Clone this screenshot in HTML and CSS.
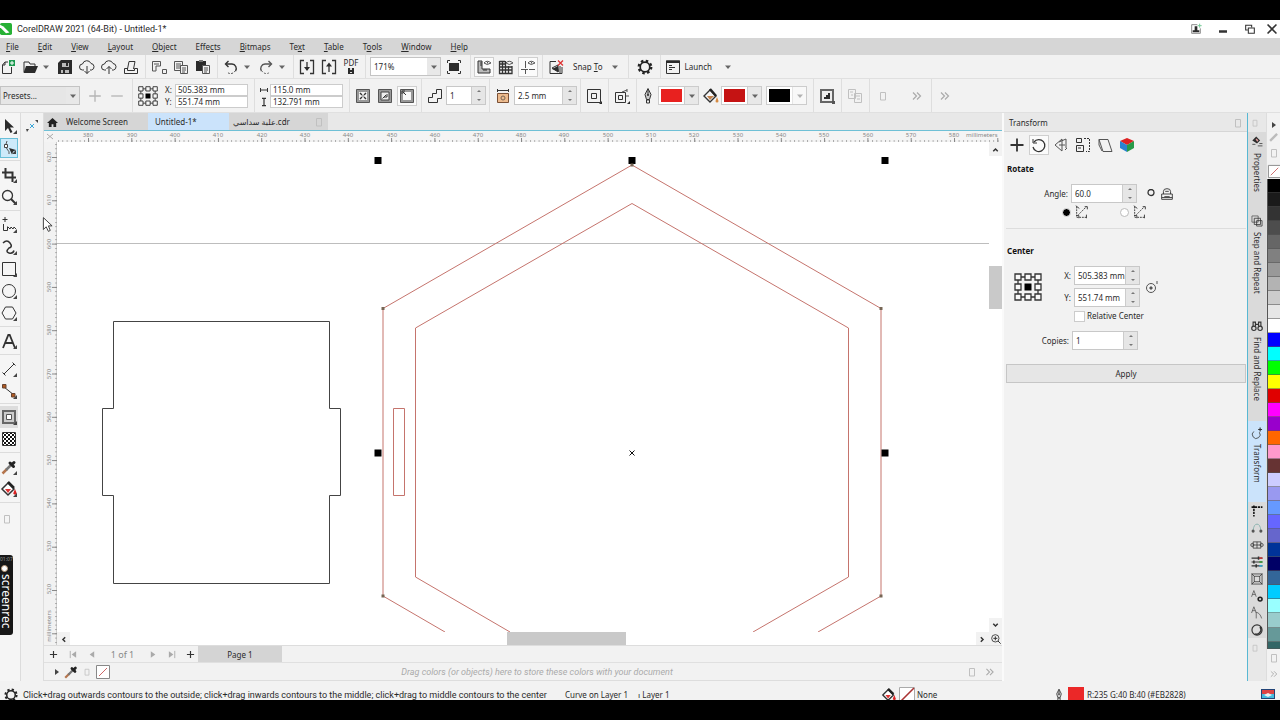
FILE: index.html
```html
<!DOCTYPE html>
<html lang="en">
<head>
<meta charset="utf-8">
<title>CorelDRAW 2021 (64-Bit) - Untitled-1*</title>
<link rel="stylesheet" href="styles.css">
</head>
<body>
<svg class="defs" aria-hidden="true">
  <symbol id="i-down" viewBox="0 0 10 10"><path d="M2 3.500h6L5 7z" fill="#666"/></symbol>
  <symbol id="i-box" viewBox="0 0 18 18"><path d="M6.500 5.500h5v7.500h-5z" fill="none" stroke="#c0c0c0"/></symbol>
  <symbol id="i-more" viewBox="0 0 18 18"><path d="M5 5.500l3.500 3.500L5 12.500M9 5.500l3.500 3.500L9 12.500" fill="none" stroke="#aaa" stroke-width="1.200"/></symbol>
  <symbol id="i-new" viewBox="0 0 18 18"><path d="M9 4H6L3.500 7v8.500h9V9M3.500 7H6V4" class="l"/><path d="M10 2h6v6h-6z" fill="#1c9a50"/><path d="M13 3v4M11 5h4" stroke="#fff"/></symbol>
  <symbol id="i-open" viewBox="0 0 18 18"><path d="M3 14V4h5l1 2h5v2" class="l"/><path d="M5 8h12l-3 7H2.500z" class="f"/></symbol>
  <symbol id="i-save" viewBox="0 0 18 18"><path d="M2 5l3-3h11v14H2z" class="f"/><path d="M6 5h7v4H6zM5 12h8v3H5z" fill="#bbb"/><path d="M10 5h2v3h-2zM7 12h2v3H7z" class="f"/></symbol>
  <symbol id="i-cdown" viewBox="0 0 18 18"><path d="M6 12H4.500a3 3 0 0 1 0-6 4.500 4.500 0 0 1 8.500-.5 3.300 3.300 0 0 1 .5 6.500H12M9 8v7.500M6.500 13L9 15.500 11.500 13" class="l"/></symbol>
  <symbol id="i-cup" viewBox="0 0 18 18"><path d="M6 12H4.500a3 3 0 0 1 0-6 4.500 4.500 0 0 1 8.500-.5 3.300 3.300 0 0 1 .5 6.500H12M9 16V8.500M6.500 11L9 8.500 11.500 11" class="l"/></symbol>
  <symbol id="i-print" viewBox="0 0 18 18"><path d="M5.500 11L7 3.500h6l-1.500 7.500M2.500 10.500h3v2h7v-2h3v5h-13z" class="l"/></symbol>
  <symbol id="i-cut" viewBox="0 0 18 18"><path d="M2.500 13V3.500h8V8H6v5zM4 6h5M12.500 11.500h4v4h-4z" class="g"/></symbol>
  <symbol id="i-copy" viewBox="0 0 18 18"><path d="M2.500 3.500h8v9h-8zM4 6h5M4 8h5M4 10h4" class="g"/><path d="M8.500 7.500h7v8h-7z" fill="#f2f2f2" stroke="#555"/><path d="M10 10h4M10 12h4M10 14h3" class="g"/></symbol>
  <symbol id="i-paste" viewBox="0 0 18 18"><path d="M2 3h10v10H2z" class="f"/><path d="M5 2h4v2H5z" fill="#777"/><path d="M8.500 7.500h7v8h-7z" fill="#f2f2f2" stroke="#555"/><path d="M10 10h4M10 12h4M10 14h3" class="g"/></symbol>
  <symbol id="i-undo" viewBox="0 0 18 18"><path d="M4 6h6a4.500 4.500 0 0 1 3.500 7" class="l" stroke-width="1.400"/><path d="M6.500 3L3.500 6l3 3" class="l" stroke-width="1.400"/><path d="M13 13a5 5 0 0 1-8 1" class="l" stroke-dasharray="1.500 1.500"/></symbol>
  <symbol id="i-redo" viewBox="0 0 18 18"><path d="M14 6H8a4.500 4.500 0 0 0-3.500 7" class="g" stroke-width="1.400"/><path d="M11.500 3l3 3-3 3" class="g" stroke-width="1.400"/><path d="M5 13a5 5 0 0 0 8 1" class="g" stroke-dasharray="1.500 1.500"/></symbol>
  <symbol id="i-import" viewBox="0 0 18 18"><path d="M6 2.500H2.500v13H6M12 2.500h3.500v13H12M9 4v8" class="l" stroke-width="1.300"/><path d="M6 9l3 4 3-4z" class="f"/></symbol>
  <symbol id="i-export" viewBox="0 0 18 18"><path d="M6 2.500H2.500v13H6M12 2.500h3.500v13H12M9 14V6" class="l" stroke-width="1.300"/><path d="M6 8.500l3-4 3 4z" class="f"/></symbol>
  <symbol id="i-disk" viewBox="0 0 8 8"><path d="M1 1h6v6H1z" class="f"/><path d="M3 1h2v2H3zM3 5h2v1H3z" fill="#ddd"/></symbol>
  <symbol id="i-full" viewBox="0 0 18 18"><path d="M4 5h10v8H4z" class="f"/><path d="M2.500 5V2.500H5M13 2.500h2.500V5M15.500 13v2.500H13M5 15.500H2.500V13" class="l"/></symbol>
  <symbol id="i-ruler" viewBox="0 0 18 18"><path d="M3 3h4v8h8v4H3z" fill="#bbb" stroke="#333"/><path d="M5 5h2M5 7h2M9 11v2M11 11v2" class="l"/><path d="M9 5q3-3.500 7 0-4 3-7 0zM12.500 4v1.500" class="g"/></symbol>
  <symbol id="i-grid" viewBox="0 0 18 18"><path d="M2.500 3v12.500H15V8M2.500 6H8M2.500 9H15M2.500 12H15M5.500 3v12.500M8.500 3v12.500M11.500 8v7.500M2.500 3.500H8" class="l" stroke-width="1.300"/><path d="M9 5q3-3.500 7 0-4 3-7 0z" class="g"/></symbol>
  <symbol id="i-guide" viewBox="0 0 18 18"><path d="M6.500 3v13M2 11.500h14" class="g" stroke-dasharray="7 1"/><path d="M9 5q3-3.500 7 0-4 3-7 0zM12.500 4v1.500" class="g"/></symbol>
  <symbol id="i-nosnap" viewBox="0 0 18 18"><path d="M9 3.500H3v12h12V9M13 8v7M5 10l6-3v7z" class="l"/><path d="M11 8l-6 3 7 3z" class="f"/><path d="M11 2.500l5 5M16 2.500l-5 5" stroke="#d33" stroke-width="1.300"/></symbol>
  <symbol id="i-gear" viewBox="0 0 18 18"><circle cx="9" cy="9" r="6.300" fill="none" stroke="#222" stroke-width="2.200" stroke-dasharray="2.500 2.450"/><circle cx="9" cy="9" r="4.800" fill="none" stroke="#222" stroke-width="1.700"/></symbol>
  <symbol id="i-launch" viewBox="0 0 18 18"><path d="M2.500 3h13v12.500h-13z" class="l"/><path d="M2 2.500h14V5H2z" class="f"/><path d="M5 7.500h3M5 9.500h6M5 11.500h3" class="l"/></symbol>
  <symbol id="i-plus" viewBox="0 0 18 18"><path d="M9 2.500v13M2.500 9h13" stroke="#b5b5b5" stroke-width="1.500"/></symbol>
  <symbol id="i-minus" viewBox="0 0 18 18"><path d="M2.500 9h13" stroke="#b5b5b5" stroke-width="1.500"/></symbol>
  <symbol id="i-origin" viewBox="0 0 28 28"><path d="M4 4h20v20H4z" class="l" stroke-width="1.300"/><path d="M1 1h6v6H1zM11 1h6v6h-6zM21 1h6v6h-6zM1 11h6v6H1zM21 11h6v6h-6zM1 21h6v6H1zM11 21h6v6h-6zM21 21h6v6h-6z" fill="#f8f8f8" stroke="#333" stroke-width="1.300"/><path d="M10.500 10.500h7v7h-7z" fill="#000"/></symbol>
  <symbol id="i-w" viewBox="0 0 10 10"><path d="M.5 2.500v5M9.500 2.500v5M1 5h8" class="l" stroke-width="1.500"/></symbol>
  <symbol id="i-h" viewBox="0 0 10 10"><path d="M2.500 .5h5M2.500 9.500h5M5 1v8" class="l" stroke-width="1.500"/></symbol>
  <symbol id="i-c1" viewBox="0 0 18 18"><path d="M2.500 2.500h13v13h-13z" fill="#999" stroke="#555"/><path d="M5 5h8v8H5z" fill="#f4f4f4"/><path d="M6 6l2 2M12 6l-2 2M6 12l2-2M12 12l-2-2M8.500 9h1" class="l" stroke-width="1.400"/></symbol>
  <symbol id="i-c2" viewBox="0 0 18 18"><path d="M2.500 2.500h13v13h-13z" fill="#999" stroke="#555"/><path d="M5 5h8v8H5z" fill="#eee" stroke="#444"/><path d="M8 10h3V7M6.500 11.500L10 8" class="l"/></symbol>
  <symbol id="i-c3" viewBox="0 0 18 18"><path d="M2.500 2.500h13v13h-13z" fill="#999" stroke="#555"/><path d="M7 5h6v8H5V7z" fill="#f7f7f7"/><path d="M4 7V4h3M5 5l3 3" class="l"/></symbol>
  <symbol id="i-steps" viewBox="0 0 18 18"><path d="M2.500 15.500v-5h4v-4h4v-4h5v9h-4v4z" class="l"/></symbol>
  <symbol id="i-off" viewBox="0 0 18 18"><path d="M3.500 6.500h11v9h-11z" fill="#edbb8e" stroke="#795036"/><circle cx="9" cy="11" r="2" fill="none" stroke="#765"/><path d="M3 3.500h12M3.500 2v3M14.500 2v3" class="l"/></symbol>
  <symbol id="i-corner" viewBox="0 0 18 18"><path d="M2.500 2.500h13v13h-13zM6.500 6.500h5v5h-5z" class="l"/><path d="M17 14v3h-3z" class="f"/></symbol>
  <symbol id="i-accel" viewBox="0 0 18 18"><path d="M2.500 5.500h10v10h-10zM5.500 8.500h4v4h-4z" class="l"/><path d="M9 5l5-2M14 2v3M13 9h3" class="g"/><path d="M17 14v3h-3z" class="f"/></symbol>
  <symbol id="i-pen" viewBox="0 0 18 18"><path d="M9 1.500l3 6-1.500 5h-3L6 7.500zM9 2v6" fill="#ccc" stroke="#333"/><circle cx="9" cy="8" r="1" class="f"/><path d="M7.500 13h3v3h-3z" class="l"/></symbol>
  <symbol id="i-bucket" viewBox="0 0 18 18"><path d="M8 3l6 6-6 6-6-6z" fill="#f5f5f5" stroke="#333" stroke-width="1.400"/><path d="M8 2l6 7" stroke="#222" stroke-width="2.500"/><path d="M5 9h7l-4 4z" fill="#c0804b"/><path d="M15 10l1.500 4a1.500 1.500 0 0 1-3 0z" fill="#d68b42"/></symbol>
  <symbol id="i-bucketr" viewBox="0 0 18 18"><path d="M8 3l6 6-6 6-6-6z" fill="#fff" stroke="#333" stroke-width="1.500"/><path d="M8 2l6 6" stroke="#222" stroke-width="2.500"/><path d="M5 9h6l-3 4z" fill="#d33"/><path d="M15 9l1.800 4.500a2 2 0 0 1-3.600 0z" fill="#d22"/></symbol>
  <symbol id="i-clear" viewBox="0 0 18 18"><path d="M3 3h12v12H3z" fill="#eee" stroke="#666" stroke-width="2"/><path d="M6 12V10h2V8h2V6h2v6z" class="f"/><path d="M14 14h3v3h-3z" fill="#555"/></symbol>
  <symbol id="i-dup" viewBox="0 0 18 18"><path d="M2.500 2.500h7v9h-7zM8.500 6.500h7v9h-7zM4 5h3M5 8h2M10 9h4M11 12h3" fill="none" stroke="#c0c0c0"/></symbol>
  <symbol id="t-pick" viewBox="0 0 18 18"><path d="M5 2v12l3-3 2.500 5 2-1L10 10.500h4z" class="f"/></symbol>
  <symbol id="t-shape" viewBox="0 0 18 18"><path d="M7 2q-3 5 0 8t2 5" class="g"/><path d="M4.500 5.500h3v3h-3z" fill="#fff" stroke="#444"/><path d="M9 9l7 2-3 1.500-1 3z" class="f"/></symbol>
  <symbol id="t-crop" viewBox="0 0 18 18"><path d="M5.500 2v9.500H16M2 6.500h10.500V16" class="l" stroke-width="2"/></symbol>
  <symbol id="t-zoom" viewBox="0 0 18 18"><circle cx="7.500" cy="7.500" r="5" class="l" stroke-width="1.300"/><path d="M11 11l4.500 4.500" class="l" stroke-width="2"/></symbol>
  <symbol id="t-free" viewBox="0 0 18 18"><path d="M5 1v5M2.500 3.500h5M3.500 8v6.500h4v-4M8 11l2 2 1-2 2 2 1-2 2 2" class="l"/></symbol>
  <symbol id="t-art" viewBox="0 0 18 18"><path d="M3 5q4-4 7 0t-1 5q-4 4 0 5 4 1 5-2.500" class="l" stroke-width="1.500"/></symbol>
  <symbol id="t-rect" viewBox="0 0 18 18"><path d="M2.500 2.500h13v13h-13z" class="l"/></symbol>
  <symbol id="t-ell" viewBox="0 0 18 18"><circle cx="9" cy="9" r="6.500" class="l"/></symbol>
  <symbol id="t-poly" viewBox="0 0 18 18"><path d="M5.500 3h7L16 9l-3.500 6h-7L2 9z" class="l"/></symbol>
  <symbol id="t-text" viewBox="0 0 18 18"><path d="M3 16L8.300 3h1.400L15 16M5 11h8" class="l" stroke-width="1.800"/></symbol>
  <symbol id="t-dim" viewBox="0 0 18 18"><path d="M4 14L14 4M2.500 12.500l3 3M12.500 2.500l3 3" class="l"/></symbol>
  <symbol id="t-conn" viewBox="0 0 18 18"><path d="M4 5l10 8" class="l"/><path d="M2.500 2.500h3.500v3.500H2.500zM11.500 11.500H15V15h-3.500z" fill="#b05a20" stroke="#643"/></symbol>
  <symbol id="t-cont" viewBox="0 0 18 18"><path d="M3 3h12v12H3z" fill="#ccc" stroke="#666" stroke-width="2"/><path d="M6.500 6.500h5v5h-5z" fill="#fff" stroke="#555"/></symbol>
  <pattern id="chk" width="4" height="4" patternUnits="userSpaceOnUse"><path d="M0 0h2v2H0zM2 2h2v2H2z" fill="#111"/></pattern>
  <symbol id="t-trans" viewBox="0 0 18 18"><path d="M2.500 2.500h13v13h-13z" fill="#fff" stroke="#333"/><path d="M3 3h12v12H3z" fill="url(#chk)"/></symbol>
  <symbol id="t-eye" viewBox="0 0 18 18"><path d="M2.500 15.500L7 11" stroke="#b5754d" stroke-width="2.500"/><path d="M6 12l5-5" stroke="#777" stroke-width="2.500"/><path d="M10 5l3.500 3.500M12 6.500l2-2" stroke="#222" stroke-width="3" stroke-linecap="round"/></symbol>
  <symbol id="d-move" viewBox="0 0 18 18"><path d="M9 2.500v13M2.500 9h13" class="l" stroke-width="1.800"/></symbol>
  <symbol id="d-rot" viewBox="0 0 18 18"><path d="M4 6a6 6 0 1 1-1 5" class="l" stroke-width="1.300"/><path d="M3 3v4h4" class="l"/></symbol>
  <symbol id="d-mir" viewBox="0 0 18 18"><path d="M10 3L3 9l7 6zM7 6l7-3v9M7 9h6M13 14l2-2" class="g"/></symbol>
  <symbol id="d-size" viewBox="0 0 18 18"><path d="M2.500 2.500h5v4h-5zM2.500 9.500h7v6h-7zM4 12h3" class="l"/><path d="M10 2.500h5.500v13H12" class="l" stroke-dasharray="2 1"/></symbol>
  <symbol id="d-skew" viewBox="0 0 18 18"><path d="M3 3.500h9l4 12H7zM3 3.500V9l3 6" class="g"/></symbol>
  <symbol id="d-3d" viewBox="0 0 18 18"><path d="M9 2l7 3-7 4-7-4z" fill="#d22"/><path d="M2 5l7 4v7l-7-4z" fill="#2b82d0"/><path d="M16 5L9 9v7l7-4z" fill="#279a48"/></symbol>
  <symbol id="d-r1" viewBox="0 0 18 18"><path d="M3 3v12h12M5 12l9-9" class="l" stroke-dasharray="2 1"/><path d="M2 2l4 3M12 3h3v3M2.500 13h3v3M14 12v4" class="l"/></symbol>
  <symbol id="d-lock" viewBox="0 0 18 18"><path d="M5 9V6q0-3 4-3t4 3v3M3 9h12v6H3zM6 12h6M7 6h4M3 13h12" class="l"/></symbol>
  <symbol id="d-cen" viewBox="0 0 18 18"><circle cx="8" cy="10" r="4.500" class="g"/><circle cx="8" cy="10" r="1" class="f"/><path d="M8 8v4M6 10h4M14 3v3" class="g"/></symbol>
  <symbol id="s-prop" viewBox="0 0 18 18"><path d="M3 7l5-5 5 5-4 4z" class="f"/><path d="M8 5l2 3" stroke="#d99" stroke-width="2"/><path d="M12 11h4M10 14h6M3 12h4" class="l"/></symbol>
  <symbol id="s-step" viewBox="0 0 18 18"><path d="M2.500 2.500h8v8h-8z" class="g"/><path d="M5.500 5.500h8v8h-8zM8.500 8.500h7v7h-7z" class="l"/></symbol>
  <symbol id="s-find" viewBox="0 0 18 18"><path d="M4 9V4h3v5M11 9V4h3v5M7 7h4" class="l" stroke-width="1.500"/><circle cx="5" cy="12" r="2.800" class="l" stroke-width="1.500"/><circle cx="13" cy="12" r="2.800" class="l" stroke-width="1.500"/></symbol>
  <symbol id="s-rot" viewBox="0 0 18 18"><path d="M12 8a5 5 0 1 1-7-1" class="l"/><path d="M13 2v5M10.500 4.500h5" class="l" stroke-width="1.500"/></symbol>
  <symbol id="s-guide" viewBox="0 0 18 18"><path d="M5 2v14M2 4h14" stroke="#111" stroke-width="2" stroke-dasharray="3 1"/></symbol>
  <symbol id="s-join" viewBox="0 0 18 18"><path d="M4 12Q5 4 9 4t5 8" fill="none" stroke="#79aaa5"/><circle cx="4" cy="13" r="2" fill="#555"/><circle cx="14" cy="13" r="2" fill="#555"/></symbol>
  <symbol id="s-link" viewBox="0 0 18 18"><path d="M4 5h10v8H4zM4 9h10M9 5v8" class="l"/><circle cx="3" cy="9" r="2" class="l"/><circle cx="15" cy="9" r="2" class="l"/></symbol>
  <symbol id="s-adj" viewBox="0 0 18 18"><path d="M2 4h14M2 14h14M2 9h14" stroke="#333" stroke-width="1.500"/><path d="M11 2v4M5 7v4M8 12v4" stroke="#333" stroke-width="2"/><path d="M12 4h4" stroke="#c33" stroke-width="2"/><path d="M12 9h4" stroke="#393" stroke-width="2"/><path d="M12 14h4" stroke="#3ad" stroke-width="2"/></symbol>
  <symbol id="s-frame" viewBox="0 0 18 18"><path d="M2.500 2.500h13v13h-13zM5.500 5.500h7v7h-7zM2 2l4 4M16 2l-4 4M2 16l4-4M16 16l-4-4" class="l"/></symbol>
  <symbol id="s-a1" viewBox="0 0 18 18"><path d="M2 10l3-8 3 8M3 7h4" class="g"/><circle cx="13" cy="13" r="2.500" fill="#ccc" stroke="#222" stroke-width="2"/></symbol>
  <symbol id="s-a2" viewBox="0 0 18 18"><path d="M2 9l3-8 3 8M3 6h4M8 16V8q5 1 7 8" class="g"/></symbol>
  <symbol id="s-lens" viewBox="0 0 18 18"><circle cx="9" cy="9" r="6.500" fill="#ddd" stroke="#333" stroke-width="1.500"/><path d="M13 5a6 6 0 0 1-7 9" class="l" stroke-width="2"/></symbol>
  <symbol id="w-user" viewBox="0 0 18 18"><path d="M11 2.500H2.500v13h13V8" class="g"/><path d="M4 14v-3h3V5h4v6h3v3z" class="f"/><path d="M14.500 1v6M11.500 4h6" stroke="#7c9" stroke-width="1.500"/></symbol>
  <symbol id="w-rest" viewBox="0 0 18 18"><path d="M5.500 10.500h-3v-7h9v3M6.500 7.500h9v8h-9z" class="l" stroke-width="1.600"/></symbol>
  <symbol id="w-close" viewBox="0 0 18 18"><path d="M4 4l10 10M14 4L4 14" class="l" stroke-width="1.800"/></symbol>
  <symbol id="none" viewBox="0 0 16 16"><path d="M1.500 1.500h13v13h-13z" fill="#fff" stroke="#888"/><path d="M4 12l8-8" stroke="#c66"/></symbol>
</svg>

<div class="band"></div>
<header class="title">
  <svg class="logo" viewBox="0 0 14 14"><rect width="14" height="14" rx="2" fill="#27b135"/><path d="M0 2l4 2 7 7-4 1-7-7z" fill="#fff"/></svg>
  <span class="grow">CorelDRAW 2021 (64-Bit) - Untitled-1*</span>
  <button class="ib w26" aria-label="Account"><svg class="s12"><use href="#w-user"/></svg></button>
  <button class="ib w26" aria-label="Minimize"><svg class="s12" viewBox="0 0 12 12"><path d="M2 8.500h8" class="l" stroke-width="2.500"/></svg></button>
  <button class="ib w26" aria-label="Restore"><svg class="s12"><use href="#w-rest"/></svg></button>
  <button class="ib w16" aria-label="Close"><svg class="s16"><use href="#w-close"/></svg></button>
</header>
<nav class="menu">
  <button><span><u>F</u>ile</span></button><button><span><u>E</u>dit</span></button><button><span><u>V</u>iew</span></button><button><span><u>L</u>ayout</span></button><button><span><u>O</u>bject</span></button><button><span>Effe<u>c</u>ts</span></button><button><span><u>B</u>itmaps</span></button><button><span>Te<u>x</u>t</span></button><button><span><u>T</u>able</span></button><button><span>T<u>o</u>ols</span></button><button><span><u>W</u>indow</span></button><button><span><u>H</u>elp</span></button>
</nav>

<div class="bar std">
  <div class="grp first">
    <button class="ib" aria-label="New"><svg><use href="#i-new"/></svg></button>
    <button class="ib" aria-label="Open"><svg><use href="#i-open"/></svg></button>
    <button class="ar" aria-label="Recent files"><svg><use href="#i-down"/></svg></button>
    <button class="ib" aria-label="Save"><svg><use href="#i-save"/></svg></button>
    <button class="ib" aria-label="Open from cloud"><svg><use href="#i-cdown"/></svg></button>
    <button class="ib" aria-label="Save to cloud"><svg><use href="#i-cup"/></svg></button>
    <button class="ib" aria-label="Print"><svg><use href="#i-print"/></svg></button>
  </div><i class="sep"></i>
  <div class="grp">
    <button class="ib" aria-label="Cut"><svg><use href="#i-cut"/></svg></button>
    <button class="ib" aria-label="Copy"><svg><use href="#i-copy"/></svg></button>
    <button class="ib" aria-label="Paste"><svg><use href="#i-paste"/></svg></button>
  </div><i class="sep"></i>
  <div class="grp">
    <button class="ib" aria-label="Undo"><svg><use href="#i-undo"/></svg></button>
    <button class="ar" aria-label="Undo list"><svg><use href="#i-down"/></svg></button>
    <button class="ib" aria-label="Redo"><svg><use href="#i-redo"/></svg></button>
    <button class="ar" aria-label="Redo list"><svg><use href="#i-down"/></svg></button>
  </div><i class="sep"></i>
  <div class="grp">
    <button class="ib" aria-label="Import"><svg><use href="#i-import"/></svg></button>
    <button class="ib" aria-label="Export"><svg><use href="#i-export"/></svg></button>
    <button class="ib pdf"><span>PDF</span><svg><use href="#i-disk"/></svg></button>
  </div><i class="sep"></i>
  <div class="combo zoom"><select aria-label="Zoom level"><option>171%</option></select><span><svg><use href="#i-down"/></svg></span></div>
  <button class="ib w26" aria-label="Full-screen preview"><svg><use href="#i-full"/></svg></button><i class="sep"></i>
  <div class="grp">
    <button class="ib on" aria-label="Rulers"><svg><use href="#i-ruler"/></svg></button>
    <button class="ib" aria-label="Grid"><svg><use href="#i-grid"/></svg></button>
    <button class="ib on" aria-label="Guidelines"><svg><use href="#i-guide"/></svg></button>
  </div><i class="sep"></i>
  <button class="ib" aria-label="Snap off"><svg><use href="#i-nosnap"/></svg></button>
  <button class="tb"><span>Snap <u>T</u>o</span><svg><use href="#i-down"/></svg></button><i class="sep"></i>
  <button class="ib w26" aria-label="Options"><svg><use href="#i-gear"/></svg></button><i class="sep"></i>
  <button class="tb launch"><svg class="big"><use href="#i-launch"/></svg><span>Launch</span><svg><use href="#i-down"/></svg></button>
</div>

<div class="bar prop">
  <div class="combo preset"><select aria-label="Presets"><option>Presets...</option></select><span><svg><use href="#i-down"/></svg></span></div>
  <div class="grp pm">
    <button class="ib" aria-label="Add preset"><svg class="s16"><use href="#i-plus"/></svg></button>
    <button class="ib" aria-label="Delete preset"><svg class="s16"><use href="#i-minus"/></svg></button>
  </div><i class="sep"></i>
  <button class="ib w26" aria-label="Object origin"><svg class="s20"><use href="#i-origin"/></svg></button>
  <div class="pair">
    <label for="px">X:</label><input id="px" value="505.383 mm">
    <label for="py">Y:</label><input id="py" value="551.74 mm">
  </div><i class="sep"></i>
  <div class="pair size">
    <label for="pw" aria-label="Width"><svg><use href="#i-w"/></svg></label><input id="pw" value="115.0 mm">
    <label for="ph" aria-label="Height"><svg><use href="#i-h"/></svg></label><input id="ph" value="132.791 mm">
  </div><i class="sep"></i>
  <div class="grp">
    <button class="ib" aria-label="To center"><svg><use href="#i-c1"/></svg></button>
    <button class="ib" aria-label="Inside contour"><svg><use href="#i-c2"/></svg></button>
    <button class="ib on" aria-label="Outside contour"><svg><use href="#i-c3"/></svg></button>
  </div><i class="sep"></i>
  <label class="ico" for="steps" aria-label="Contour steps"><svg><use href="#i-steps"/></svg></label>
  <div class="spin steps"><input id="steps" value="1"><button aria-label="Up"></button><button aria-label="Down"></button></div><i class="sep"></i>
  <label class="ico" for="offs" aria-label="Contour offset"><svg><use href="#i-off"/></svg></label>
  <div class="spin offs"><input id="offs" value="2.5 mm"><button aria-label="Up"></button><button aria-label="Down"></button></div><i class="sep"></i>
  <button class="ib" aria-label="Contour corners"><svg><use href="#i-corner"/></svg></button><i class="sep"></i>
  <button class="ib" aria-label="Acceleration"><svg><use href="#i-accel"/></svg></button><i class="sep"></i>
  <svg class="picic"><use href="#i-pen"/></svg>
  <button class="cp" aria-label="Outline color"><b class="c-red"></b><span><svg><use href="#i-down"/></svg></span></button>
  <svg class="picic"><use href="#i-bucket"/></svg>
  <button class="cp" aria-label="Fill color"><b class="c-dred"></b><span><svg><use href="#i-down"/></svg></span></button>
  <button class="cp dim" aria-label="Last fill color"><b class="c-blk"></b><span><svg><use href="#i-down"/></svg></span></button><i class="sep"></i>
  <button class="ib" aria-label="Clear contour"><svg><use href="#i-clear"/></svg></button><i class="sep"></i>
  <button class="ib" aria-label="Copy contour"><svg><use href="#i-dup"/></svg></button><i class="sep"></i>
  <button class="ib" aria-label="Customize"><svg><use href="#i-box"/></svg></button>
  <button class="ib more" aria-label="More"><svg><use href="#i-more"/></svg></button><i class="sep"></i>
  <button class="ib" aria-label="More"><svg><use href="#i-more"/></svg></button>
</div>

<main class="main">
  <aside class="tools">
    <button aria-label="Pick"><svg><use href="#t-pick"/></svg></button>
    <button class="sel" aria-label="Shape"><svg><use href="#t-shape"/></svg></button><hr>
    <button aria-label="Crop"><svg><use href="#t-crop"/></svg></button>
    <button aria-label="Zoom"><svg><use href="#t-zoom"/></svg></button><hr>
    <button aria-label="Freehand"><svg><use href="#t-free"/></svg></button>
    <button aria-label="Artistic media"><svg><use href="#t-art"/></svg></button>
    <button aria-label="Rectangle"><svg><use href="#t-rect"/></svg></button>
    <button aria-label="Ellipse"><svg><use href="#t-ell"/></svg></button>
    <button aria-label="Polygon"><svg><use href="#t-poly"/></svg></button><hr>
    <button aria-label="Text"><svg><use href="#t-text"/></svg></button><hr>
    <button aria-label="Dimension"><svg><use href="#t-dim"/></svg></button>
    <button aria-label="Connector"><svg><use href="#t-conn"/></svg></button><hr class="tight">
    <button class="gray" aria-label="Contour"><svg><use href="#t-cont"/></svg></button>
    <button class="nt" aria-label="Transparency"><svg><use href="#t-trans"/></svg></button><hr>
    <button aria-label="Eyedropper"><svg><use href="#t-eye"/></svg></button>
    <button aria-label="Fill"><svg><use href="#i-bucketr"/></svg></button><hr>
    <button class="nt cust" aria-label="Customize"><svg><use href="#i-box"/></svg></button>
  </aside>
  <div class="strip"><svg viewBox="0 0 14 14"><path d="M5 5l4 4M9 5L5 9" stroke="#3aa6d8"/><path d="M10 1h3v3zM1 10h3l-2 3z" fill="#444"/></svg></div>

  <section class="doc">
    <div class="tabs">
      <button class="home" aria-label="Home"><svg viewBox="0 0 12 12"><path d="M6 1L0 6.500h2V11h3V8h2v3h3V6.500h2z" fill="#222"/></svg></button>
      <button class="t1">Welcome Screen</button>
      <button class="t2">Untitled-1*</button>
      <button class="t3"><span dir="ltr"><bdi>علبة سداسي</bdi>.cdr</span><svg><use href="#i-box"/></svg></button>
    </div>
    <div class="hr">
      <svg>
        <pattern id="tx" width="4.330" height="11" x="1" patternUnits="userSpaceOnUse"><path d="M.5 9v2" stroke="#999" stroke-width=".8"/></pattern>
        <pattern id="txb" width="43.300" height="11" x="44" patternUnits="userSpaceOnUse"><path d="M.5 7v4" stroke="#888"/></pattern>
        <rect x="13" width="100%" height="11" fill="url(#tx)"/><rect x="13" width="100%" height="11" fill="url(#txb)"/>
        <path d="M3 3l6 5M9 3L3 8" stroke="#aaa"/>
        <g text-anchor="middle"><text x="44" y="6">380</text><text x="88" y="6">390</text><text x="131" y="6">400</text><text x="174" y="6">410</text><text x="218" y="6">420</text><text x="261" y="6">430</text><text x="304" y="6">440</text><text x="348" y="6">450</text><text x="391" y="6">460</text><text x="434" y="6">470</text><text x="477" y="6">480</text><text x="520" y="6">490</text><text x="564" y="6">500</text><text x="607" y="6">510</text><text x="650" y="6">520</text><text x="694" y="6">530</text><text x="737" y="6">540</text><text x="780" y="6">550</text><text x="824" y="6">560</text><text x="867" y="6">570</text><text x="910" y="6">580</text></g>
        <text x="922" y="6">millimeters</text>
      </svg>
    </div>
    <div class="work">
      <div class="vr">
        <svg>
          <pattern id="ty" height="4.330" width="13" y="2" patternUnits="userSpaceOnUse"><path d="M11 .5h2" stroke="#999" stroke-width=".8"/></pattern>
          <pattern id="tyb" height="43.300" width="13" y="15" patternUnits="userSpaceOnUse"><path d="M8 .5h5" stroke="#888"/></pattern>
          <rect width="13" height="100%" fill="url(#ty)"/><rect width="13" height="100%" fill="url(#tyb)"/>
          <g text-anchor="middle"><text transform="translate(7 15) rotate(-90)">620</text><text transform="translate(7 58) rotate(-90)">610</text><text transform="translate(7 102) rotate(-90)">600</text><text transform="translate(7 145) rotate(-90)">590</text><text transform="translate(7 188) rotate(-90)">580</text><text transform="translate(7 232) rotate(-90)">570</text><text transform="translate(7 275) rotate(-90)">560</text><text transform="translate(7 318) rotate(-90)">550</text><text transform="translate(7 361) rotate(-90)">540</text><text transform="translate(7 404) rotate(-90)">530</text><text transform="translate(7 447) rotate(-90)">520</text><text transform="translate(7 484) rotate(-90)">millimeters</text></g>
        </svg>
      </div>
      <div class="canvas">
        <svg aria-label="Drawing">
          <g transform="translate(-57 -142)" fill="none">
            <path d="M57 243.500h4000" stroke="#bdbdbd"/>
            <path d="M113.500 321.500H329.500V408.500H340.500V495.500H329.500V583.500H113.500V495.500H102.500V408.500H113.500z" stroke="#444"/>
            <g stroke="#c5746d"><path d="M445 632L383 596V308.500L632 165l249 143.500V596L818 632M510 632L415.500 577V328L632 203.500 848.500 328V577L753 632M393.500 408.500h11v87h-11z"/></g>
            <path d="M374.500 157h7v7h-7zM628.500 157h7v7h-7zM881.500 157h7v7h-7zM374.500 449.500h7v7h-7zM881.500 449.500h7v7h-7z" fill="#000"/>
            <path d="M381.500 307h3v3h-3zM879.500 307h3v3h-3zM381.500 594.500h3v3h-3zM879.500 594.500h3v3h-3zM630.500 163.500h3v3h-3z" fill="#765"/>
            <path d="M629.500 450.500l5 5M634.500 450.500l-5 5" stroke="#111"/>
          </g>
        </svg>
      </div>
      <div class="vs"><button aria-label="Scroll up"><svg viewBox="0 0 8 8"><path d="M2 5.500l2-2 2 2" class="l" stroke-width="1.300"/></svg></button><i></i><button aria-label="Scroll down"><svg viewBox="0 0 8 8"><path d="M2 2.500l2 2 2-2" class="l" stroke-width="1.300"/></svg></button></div>
    </div>
    <div class="hs"><button aria-label="Scroll left"><svg viewBox="0 0 8 8"><path d="M5.500 2l-2 2 2 2" class="l" stroke-width="1.300"/></svg></button><i class="th"></i><button class="r" aria-label="Scroll right"><svg viewBox="0 0 8 8"><path d="M2.500 2l2 2-2 2" class="l" stroke-width="1.300"/></svg></button><button aria-label="Navigator"><svg class="s12" viewBox="0 0 18 18"><circle cx="8" cy="8" r="5.500" class="l" stroke-width="1.300"/><path d="M8 5v6M5 8h6M12 12l4 4" class="l" stroke-width="1.500"/></svg></button></div>
    <div class="pages">
      <button class="add" aria-label="Add page"><svg viewBox="0 0 10 10"><path d="M5 1v8M1 5h8" class="l" stroke-width="1.300"/></svg></button>
      <button aria-label="First page"><svg viewBox="0 0 10 10"><path d="M2.500 1v8" stroke="#aaa"/><path d="M9 1.500v7L4 5z" fill="#aaa"/></svg></button>
      <button aria-label="Previous page"><svg viewBox="0 0 10 10"><path d="M8 1.500v7L3 5z" fill="#aaa"/></svg></button>
      <span class="cnt">1 of 1</span>
      <button aria-label="Next page"><svg viewBox="0 0 10 10"><path d="M2 1.500v7L7 5z" fill="#aaa"/></svg></button>
      <button aria-label="Last page"><svg viewBox="0 0 10 10"><path d="M7.500 1v8" stroke="#aaa"/><path d="M1 1.500v7L6 5z" fill="#aaa"/></svg></button>
      <button class="after" aria-label="Add page after"><svg viewBox="0 0 10 10"><path d="M5 1v8M1 5h8" class="l" stroke-width="1.300"/></svg></button>
      <button class="pg">Page 1</button>
    </div>
    <div class="dpal">
      <svg viewBox="0 0 10 10" class="s10"><path d="M3 2v6l4-3z" fill="#444"/></svg>
      <svg class="s16"><use href="#t-eye"/></svg>
      <svg class="s14"><use href="#i-box"/></svg>
      <svg class="s16"><use href="#none"/></svg>
      <em>Drag colors (or objects) here to store these colors with your document</em>
      <svg class="s18"><use href="#i-box"/></svg><svg class="s16"><use href="#i-more"/></svg>
    </div>
  </section>

  <section class="docker">
    <h2><span>Transform</span><svg><use href="#i-box"/></svg></h2>
    <div class="dbody">
      <div class="modes">
        <button class="ib" aria-label="Position"><svg><use href="#d-move"/></svg></button><button class="ib on" aria-label="Rotate"><svg><use href="#d-rot"/></svg></button><button class="ib" aria-label="Scale and mirror"><svg><use href="#d-mir"/></svg></button><button class="ib" aria-label="Size"><svg><use href="#d-size"/></svg></button><button class="ib" aria-label="Skew"><svg><use href="#d-skew"/></svg></button><button class="ib" aria-label="3D"><svg><use href="#d-3d"/></svg></button>
      </div>
      <h3>Rotate</h3>
      <div class="row angle"><label for="ang">Angle:</label><div class="spin wide"><input id="ang" value="60.0"><button aria-label="Up"></button><button aria-label="Down"></button></div><svg class="s10" viewBox="0 0 10 10"><circle cx="5" cy="3.500" r="3" class="l" stroke-width="1.300"/></svg><svg class="s16"><use href="#d-lock"/></svg></div>
      <div class="row radios"><label><input type="radio" name="m" checked aria-label="Relative to object"><svg class="s16"><use href="#d-r1"/></svg></label><label><input type="radio" name="m" aria-label="Relative to page"><svg class="s16"><use href="#d-r1"/></svg></label></div>
      <hr>
      <h3>Center</h3>
      <div class="center">
        <svg class="org"><use href="#i-origin"/></svg>
        <label for="cx">X:</label><div class="spin wide"><input id="cx" value="505.383 mm"><button aria-label="Up"></button><button aria-label="Down"></button></div>
        <svg class="cen"><use href="#d-cen"/></svg>
        <label for="cy">Y:</label><div class="spin wide"><input id="cy" value="551.74 mm"><button aria-label="Up"></button><button aria-label="Down"></button></div>
      </div>
      <label class="chk"><input type="checkbox">Relative Center</label>
      <div class="row copies"><label for="cps">Copies:</label><div class="spin wide"><input id="cps" value="1"><button aria-label="Up"></button><button aria-label="Down"></button></div></div>
      <button class="apply">Apply</button>
    </div>
  </section>

  <nav class="side">
    <button class="close" aria-label="Close docker"><svg><use href="#i-box"/></svg></button>
    <button class="v a"><svg><use href="#s-prop"/></svg>Properties</button>
    <button class="v b"><svg><use href="#s-step"/></svg>Step and Repeat</button>
    <button class="v b"><svg><use href="#s-find"/></svg>Find and Replace</button>
    <button class="v cur"><svg><use href="#s-rot"/></svg>Transform</button>
    <button class="q" aria-label="Guidelines"><svg><use href="#s-guide"/></svg></button>
    <button class="q" aria-label="Join curves"><svg><use href="#s-join"/></svg></button>
    <button class="q" aria-label="Links"><svg><use href="#s-link"/></svg></button>
    <button class="q" aria-label="Adjustments"><svg><use href="#s-adj"/></svg></button>
    <button class="q" aria-label="Effects"><svg><use href="#s-frame"/></svg></button>
    <button class="q" aria-label="Text"><svg><use href="#s-a1"/></svg></button>
    <button class="q" aria-label="Glyphs"><svg><use href="#s-a2"/></svg></button>
    <button class="q" aria-label="Lens"><svg><use href="#s-lens"/></svg></button>
    <button class="end" aria-label="Add docker"><svg><use href="#i-box"/></svg></button>
  </nav>

  <aside class="pal">
    <div class="ph"><svg class="s10" viewBox="0 0 10 10"><path d="M3 2v6l4-3z" fill="#444"/></svg><svg class="s14" viewBox="0 0 18 18"><path d="M4 14L13 5" stroke="#bbb" stroke-width="3"/></svg><svg><use href="#i-box"/></svg></div>
    <svg class="no"><use href="#none"/></svg>
    <div class="sw">
      <i style="background:#000"></i><i style="background:#1a1a1a"></i><i style="background:#333"></i><i style="background:#4d4d4d"></i><i style="background:#666"></i><i style="background:#808080"></i><i style="background:#999"></i><i style="background:#b3b3b3"></i><i style="background:#ccc"></i><i style="background:#e6e6e6"></i><i style="background:#fff"></i><i style="background:#00f"></i><i style="background:#0ff"></i><i style="background:#0f0"></i><i style="background:#ff0"></i><i style="background:#e00000"></i><i style="background:#f0f"></i><i style="background:#90c"></i><i style="background:#f60"></i><i style="background:#f9c"></i><i style="background:#633"></i><i style="background:#ccf"></i><i style="background:#9999f0"></i><i style="background:#69f"></i><i style="background:#66f"></i><i style="background:#66c"></i><i style="background:#039"></i><i style="background:#006"></i><i style="background:#369"></i><i style="background:#0cf"></i><i style="background:#9ff"></i><i style="background:#9cc"></i><i style="background:#699"></i><i class="half" style="background:#366"></i>
    </div>
    <div class="pf"><svg><use href="#i-box"/></svg><svg class="s14"><use href="#i-more"/></svg></div>
  </aside>

  <div class="rec"><small>01:07</small><b></b><span>screenrec</span></div>
  <svg class="cursor" viewBox="0 0 12 18"><path d="M1.500 1.500v13l3-3 2.500 5 2-1-2-5H11z" fill="#fff" stroke="#333"/></svg>
</main>

<footer class="status">
  <svg class="s16"><use href="#i-gear"/></svg>
  <span class="hint">Click+drag outwards contours to the outside; click+drag inwards contours to the middle; click+drag to middle contours to the center</span>
  <span class="sel1">Curve on Layer 1</span><span class="sel2">ו Layer 1</span>
  <div class="fill"><svg class="s16"><use href="#i-bucketr"/></svg><svg class="s16" viewBox="0 0 16 16"><path d="M.5.5h15v15H.5z" fill="#fff" stroke="#aaa"/><path d="M1 15L15 1" stroke="#a33" stroke-width="1.500"/></svg>None</div>
  <div class="outl"><svg class="s14"><use href="#i-pen"/></svg><b></b>R:235 G:40 B:40 (#EB2828)</div>
  <svg class="proof" viewBox="0 0 14 14"><path d="M0 1h14v10H0z" fill="#247"/><path d="M1 2h12v4H1z" fill="#d44"/><path d="M1 6h12v4H1z" fill="#4bd"/><path d="M3 7l4-2 4 2-4 2z" fill="#eee"/><path d="M3 12h8v1H3z" fill="#333"/></svg>
</footer>
<div class="band"></div>
</body>
</html>
```
FILE: styles.css
```css
* { box-sizing: border-box; }
body {
  margin: 0;
  height: 100vh;
  display: flex;
  flex-direction: column;
  overflow: hidden;
  background: #f2f2f2;
  color: #2a2a2a;
  font: 8px/12px "Noto Sans", "DejaVu Sans", sans-serif;
}
button, input, select {
  font: inherit;
  color: inherit;
  margin: 0;
  padding: 0;
  border: 0;
  background: none;
  min-width: 0;
  border-radius: 0;
}
button { display: flex; align-items: center; justify-content: center; }
svg { display: block; flex: none; width: 18px; height: 18px; }
.defs { position: absolute; width: 0; height: 0; }
.l { fill: none; stroke: #333; }
.g { fill: none; stroke: #555; }
.f { fill: #2b2b2b; }
.s10 { width: 10px; height: 10px; }
.s12 { width: 12px; height: 12px; }
.s14 { width: 14px; height: 14px; }
.s16 { width: 16px; height: 16px; }
.s18 { width: 18px; height: 18px; }
.s20 { width: 20px; height: 20px; }
.grow { flex: 1; }

.band { flex: none; height: 20px; background: #000; }
.title { display: flex; align-items: center; height: 18px; background: #fff; gap: 1px; }
.title .grow { padding-left: 4px; font-size: 9px; font-family: Roboto, "Noto Sans", sans-serif; }
.logo { width: 12px; height: 12px; }
.menu { display: flex; align-items: center; height: 17px; gap: 19px; padding-left: 6px; background: #d6d6d6; }

.bar { display: flex; align-items: center; border-bottom: 1px solid #e0e0e0; }
.std { height: 24px; }
.prop { height: 34px; }
.grp { display: flex; align-items: center; }
.first { margin-left: -3px; }
.ib { width: 22px; height: 20px; flex: none; }
.w26 { width: 26px; }
.w16 { width: 16px; }
.on { background: #fbfbfb; border: 1px solid #cfcfcf; width: 20px; margin: 0 1px; }
.ar { width: 10px; flex: none; margin-right: 3px; }
.ar svg, .tb svg, .combo svg, .cp svg { width: 10px; height: 10px; }
.sep { flex: none; width: 6px; align-self: stretch; background: linear-gradient(#dedede, #dedede) center / 1px 100% no-repeat; }
.pdf { flex-direction: column; line-height: 8px; }
.pdf svg { width: 8px; height: 8px; }
.combo { display: flex; position: relative; height: 19px; border: 1px solid #c4c4c4; background: #fff; }
.combo select { appearance: none; flex: 1; padding-left: 3px; width: 100%; }
.combo span { position: absolute; right: 0; top: 0; bottom: 0; width: 13px; display: grid; place-items: center; background: #e8e8e8; pointer-events: none; }
.zoom { width: 71px; margin-left: 2px; }
.preset { width: 80px; background: #e6e6e6; }
.preset select { padding-left: 2px; }
.pm { margin: 0 1px 0 4px; }
.tb { gap: 7px; padding: 0 6px; }
.launch { gap: 11px; padding-left: 0; }
.launch .big { width: 18px; height: 18px; margin-right: -8px; }

.pair { display: grid; grid-template-columns: 10px 73px; align-items: center; padding: 0 3px 0 4px; }
.pair label { line-height: 11px; }
.pair svg { width: 8px; height: 10px; }
.pair input { height: 12px; background: #fff; border: 1px solid #ccc; padding-left: 2px; width: 100%; }
.pair.size { padding: 0 3px 0 3px; }
.ico { width: 22px; display: grid; place-items: center; }
.spin { display: grid; grid-template: 1fr 1fr / 1fr 14px; height: 19px; background: #fff; border: 1px solid #c8c8c8; }
.spin input { grid-row: 1 / 3; padding-left: 3px; width: 100%; }
.spin button { background: #e6e6e6; border-left: 1px solid #ccc; }
.spin button::before { content: ""; border: 2px solid transparent; border-bottom-color: #777; margin-bottom: 2px; }
.spin button:last-child::before { border-bottom-color: transparent; border-top-color: #777; margin: 2px 0 0; }
.steps { width: 40px; }
.offs { width: 63px; }
.picic { width: 18px; height: 18px; }
.cp { width: 41px; height: 19px; border: 1px solid #ccc; background: #fff; margin: 0 3px 0 1px; }
.cp b { flex: 1; height: 13px; margin: 2px; }
.cp span { width: 14px; align-self: stretch; display: grid; place-items: center; background: #e8e8e8; border-left: 1px solid #ccc; }
.cp.dim span { background: #f2f2f2; opacity: .5; }
.c-red { background: #e8211f; }
.c-dred { background: #c51313; }
.c-blk { background: #000; }
.more { margin-left: 12px; }

.main { flex: 1; display: flex; min-height: 0; position: relative; }
.tools { width: 21px; flex: none; padding-top: 2px; border-right: 1px solid #dcdcdc; background: #f5f5f5; }
.tools button { position: relative; width: 18px; height: 22px; }
.tools button::after { content: ""; position: absolute; right: 1px; bottom: 3px; border: 2px solid; border-color: transparent #444 #444 transparent; }
.tools .nt::after { display: none; }
.tools hr { border: 0; border-top: 1px solid #dcdcdc; margin: 2px 0 3px; height: 0; }
.tools .tight { margin: 1px 0 2px; }
.tools .sel { background: #cdeafa; border: 1px solid #69bfd8; height: 20px; margin: 1px 0; }
.tools .gray { background: #ddd; }
.tools .cust { width: 13px; height: 26px; }
.strip { width: 23px; flex: none; border-right: 1px solid #ddd; padding: 6px 4px; }
.strip svg { width: 14px; height: 14px; }

.doc { flex: 1; min-width: 0; display: flex; flex-direction: column; }
.tabs { display: flex; height: 18px; flex: none; background: #e8e8e8; border-bottom: 1px solid #6fc0d6; }
.tabs button { background: #d6d6d6; padding-top: 1px; }
.tabs .home { width: 17px; }
.home svg { width: 11px; height: 11px; }
.tabs .t1 { width: 87px; padding-left: 5px; justify-content: flex-start; }
.tabs .t2 { width: 81px; padding-left: 7px; justify-content: flex-start; background: #cbe3fb; }
.tabs .t3 { width: 99px; padding-left: 4px; justify-content: space-between; }
.hr { height: 11px; flex: none; background: #f4f4f4; }
.hr svg { width: 100%; height: 11px; overflow: hidden; }
.hr text, .vr text { font-size: 6px; fill: #888; }
.work { flex: 1; display: flex; min-height: 0; }
.vr { width: 13px; flex: none; border-right: 1px solid #ccc; margin-bottom: -13px; }
.vr svg { width: 13px; height: 100%; }
.canvas { flex: 1; min-width: 0; background: #fff; }
.canvas svg { width: 100%; height: 100%; overflow: hidden; }
.vs { width: 13px; flex: none; background: #fff; display: flex; flex-direction: column; }
.vs button, .hs button { width: 13px; height: 14px; background: #f2f2f2; }
.vs svg, .hs svg { width: 9px; height: 9px; }
.hs .s12 { width: 12px; height: 12px; }
.vs i { height: 43px; margin: 110px 0 auto; background: #c9c9c9; }
.hs { display: flex; height: 13px; flex: none; margin-left: 13px; background: #fff; }
.hs .th { width: 119px; margin-left: 437px; background: #c9c9c9; }
.hs .r { margin-left: auto; }
.pages { display: flex; align-items: stretch; height: 18px; flex: none; border-top: 1px solid #ddd; border-bottom: 1px solid #e0e0e0; }
.pages button { width: 19px; padding-top: 1px; }
.pages svg { width: 9px; height: 9px; }
.pages .after { width: 17px; }
.cnt { width: 43px; text-align: center; color: #888; font-size: 9px; line-height: 17px; }
.pages .pg { width: 56px; background: #d4d4d4; }
.pages .pg { padding-left: 14px; padding-right: 14px; width: 84px; }
.pages .after { margin-right: -1px; }
.dpal { display: flex; align-items: center; height: 18px; flex: none; padding: 0 4px 0 8px; border-bottom: 1px solid #ddd; gap: 1px; }
.dpal em { flex: 1; text-align: center; color: #aaa; font-size: 9px; font-family: Roboto, "Noto Sans", sans-serif; }

.docker { width: 246px; flex: none; border-left: 2px solid #fafafa; border-right: 1px solid #58b8d3; }
.docker h2 { margin: 0; height: 19px; display: flex; align-items: center; font-weight: 400; font-size: 8px; padding: 1px 0 0 5px; background: #e8e8e8; border-bottom: 1px solid #d6d6d6; }
.docker h2 span { flex: 1; }
.dbody { padding: 3px 1px 0 2px; }
.modes { display: flex; align-items: center; height: 20px; }
.docker h3 { margin: 8px 0 0 1px; font-size: 8px; line-height: 12px; height: 12px; color: #111; }
.row { display: flex; align-items: center; }
.row > label { text-align: right; }
.angle { margin-top: 9px; gap: 3px; }
.angle > label { width: 62px; }
.wide { width: 66px; }
.angle .s10 { margin-left: 6px; }
.radios { height: 18px; padding-left: 56px; gap: 30px; }
.radios label { display: flex; align-items: center; gap: 3px; }
.radios input { appearance: none; width: 9px; height: 9px; border-radius: 50%; background: #fff; border: 1px solid #bbb; }
.radios input:checked { background: #000; border: 1px solid #f2f2f2; }
.dbody hr { border: 0; border-top: 1px solid #ddd; margin: 7px 0 0; }
.docker hr + h3 { margin-top: 16px; }
.center { display: grid; grid-template-columns: 28px 26px 66px 18px; column-gap: 3px; row-gap: 3px; align-items: center; padding-left: 8px; margin-top: 9px; }
.center label { text-align: right; }
.org { width: 28px; height: 28px; grid-row: 1 / 3; }
.cen { width: 18px; height: 18px; grid-row: 1 / 3; grid-column: 4; }
.center label[for="cy"] { grid-row: 2; grid-column: 2; }
.center label[for="cy"] + .spin { grid-row: 2; grid-column: 3; }
.chk { display: flex; align-items: center; gap: 2px; height: 18px; padding-left: 68px; }
.chk input { appearance: none; width: 11px; height: 11px; background: #fff; border: 1px solid #ccc; }
.copies { margin-top: 6px; gap: 3px; }
.copies > label { width: 63px; }
.apply { width: 100%; height: 19px; margin-top: 14px; background: #e6e6e6; border: 1px solid #c6c6c6; }

.side { width: 18px; flex: none; background: #e8e8e8; display: flex; flex-direction: column; }
.side svg { width: 14px; height: 14px; }
.close { height: 19px; width: 14px; }
.v { writing-mode: vertical-rl; width: 18px; display: flex; justify-content: flex-start; gap: 4px; background: #dadada; white-space: nowrap; }
.v.a { height: 79px; padding-top: 3px; }
.v.b { height: 105px; padding-top: 3px; }
.v.cur { height: 81px; padding-top: 5px; background: #cbe3fb; }
.q { width: 18px; height: 17px; background: #dadada; }
.end { width: 14px; height: 20px; }

.pal { width: 14px; flex: none; display: flex; flex-direction: column; border-left: 1px solid #ddd; overflow: hidden; }
.ph { height: 51px; padding-top: 7px; display: flex; flex-direction: column; align-items: center; }
.no { width: 15px; height: 15px; }
.sw { height: 470px; display: flex; flex-direction: column; border-left: 1px solid #555; }
.sw i { flex: 2; border-bottom: 1px solid #5558; }
.sw .half { flex: 1; }
.pf { display: flex; flex-direction: column; align-items: center; }

.rec { position: absolute; left: 0; top: 442px; width: 13px; height: 80px; background: #181818; border-radius: 0 3px 3px 0; color: #fff; overflow: hidden; }
.rec small { display: block; font-size: 5px; line-height: 9px; color: #999; }
.rec b { display: block; width: 7px; height: 7px; margin: 1px auto 2px 1px; border-radius: 50%; background: #fff; border: 1px solid #b97; }
.rec span { writing-mode: vertical-rl; display: block; font-size: 12px; line-height: 12px; width: 12px; white-space: nowrap; }
.cursor { position: absolute; left: 42px; top: 103px; width: 11px; height: 17px; }

.status { display: flex; align-items: center; height: 19px; padding: 9px 5px 0 3px; overflow: hidden; white-space: nowrap; }
.status .hint { margin-left: 4px; width: 542px; flex: none; font-size: 9px; font-family: Roboto, "Noto Sans", sans-serif; }
.sel1 { width: 73px; flex: none; }
.sel2 { flex: 1; }
.fill, .outl { display: flex; align-items: center; flex: none; gap: 2px; }
.fill { width: 171px; }
.outl { width: 209px; }
.outl b { width: 16px; height: 16px; background: #eb2828; margin: 0 1px 0 0; }
.proof { width: 14px; height: 14px; }
```
